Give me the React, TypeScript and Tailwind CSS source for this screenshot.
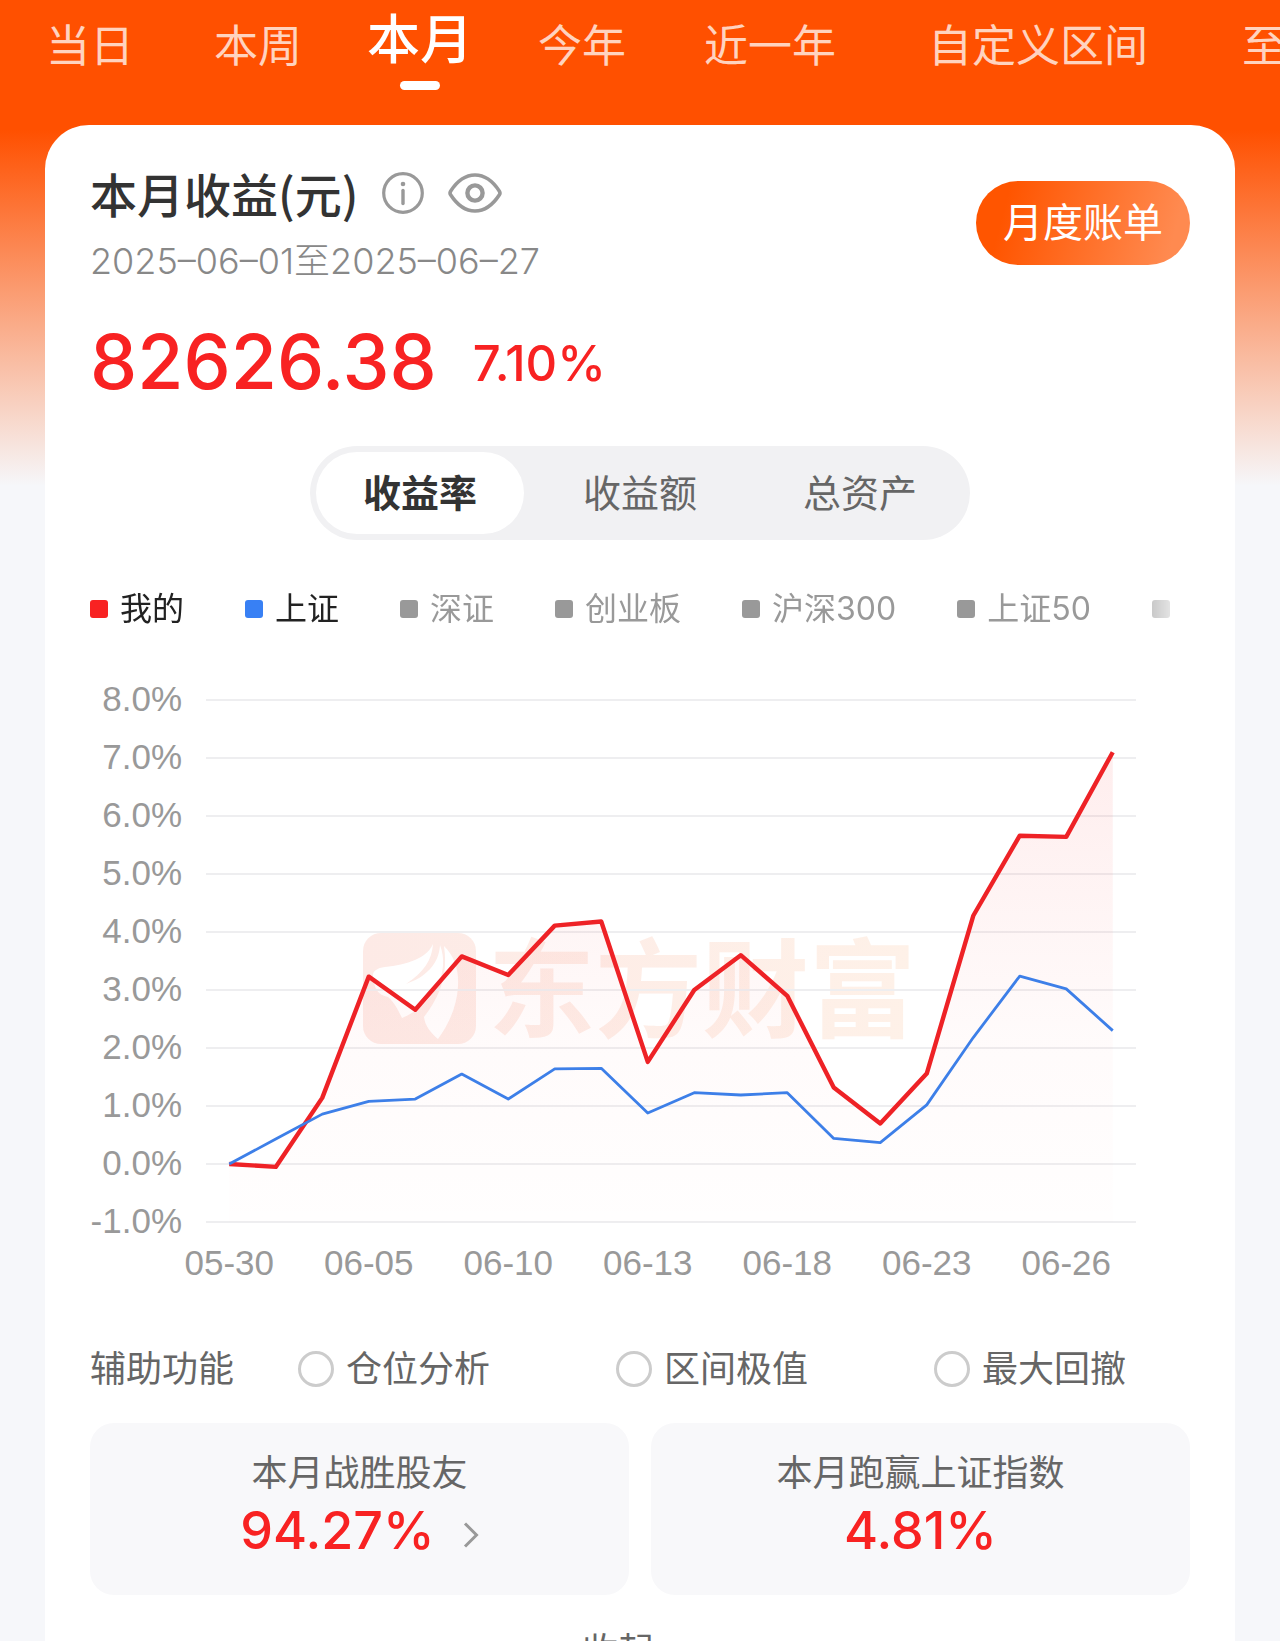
import React, { useState } from "react";

const RANGE_TABS = [
  { label: "当日", width: "w-42" },
  { label: "本周", width: "w-42" },
  { label: "本月", width: "w-39" },
  { label: "今年", width: "w-42" },
  { label: "近一年", width: "w-52" },
  { label: "自定义区间", width: "w-82" },
  { label: "至今", width: "w-42" },
];

const METRICS = ["收益率", "收益额", "总资产"];

const SERIES = [
  { label: "我的", dot: "bg-[#f82222]", text: "text-[#222222]" },
  { label: "上证", dot: "bg-[#3880f4]", text: "text-[#222222]" },
  { label: "深证", dot: "bg-[#999999]", text: "text-[#999999]" },
  { label: "创业板", dot: "bg-[#999999]", text: "text-[#999999]" },
  { label: "沪深300", dot: "bg-[#999999]", text: "text-[#999999]" },
  { label: "上证50", dot: "bg-[#999999]", text: "text-[#999999]" },
  { label: "", dot: "bg-[#999999]", text: "text-[#999999]" },
];

const HELPERS = ["仓位分析", "区间极值", "最大回撤"];

const MINE = [
  0, -0.05, 1.14, 3.23, 2.66, 3.58, 3.26, 4.11, 4.18, 1.76, 3.0, 3.6, 2.9, 1.32, 0.7, 1.56, 4.28,
  5.66, 5.64, 7.1,
];
const INDEX = [
  0, 0.43, 0.86, 1.08, 1.12, 1.55, 1.12, 1.64, 1.65, 0.88, 1.23, 1.19, 1.23, 0.44, 0.37, 1.02, 2.18,
  3.24, 3.02, 2.3,
];
const DATES = ["05-30", "06-05", "06-10", "06-13", "06-18", "06-23", "06-26"];
const LEVELS = [8, 7, 6, 5, 4, 3, 2, 1, 0, -1];

// Chart geometry, in viewBox units
const LEFT = 116;
const RIGHT = 1046;
const TOP = 21;
const ROW = 58;
const STEP = (RIGHT - LEFT) / MINE.length;

const xAt = (i: number) => LEFT + STEP * (i + 0.5);
const yAt = (v: number) => TOP + (8 - v) * ROW;
const toPoints = (values: number[]) => values.map((v, i) => `${xAt(i)},${yAt(v)}`).join(" ");

const InfoIcon: React.FC = () => (
  <svg className="size-[42px]" viewBox="0 0 42 42" fill="none" stroke="#999999">
    <circle cx="21" cy="21" r="19.3" strokeWidth="3.2" />
    <path d="M21 18.5V31.5" strokeWidth="3.4" strokeLinecap="round" />
    <circle cx="21" cy="12" r="2.3" fill="#999999" stroke="none" />
  </svg>
);

const EyeIcon: React.FC = () => (
  <svg className="h-10 w-[54px]" viewBox="0 0 54 40" fill="none" stroke="#999999">
    <path
      d="M2.6 18.2C9.5 7.5 17.5 2 27 2s17.5 5.5 24.4 16.2c.7 1.1.7 2.5 0 3.6C44.5 32.5 36.5 38 27 38S9.5 32.5 2.6 21.8c-.7-1.1-.7-2.5 0-3.6Z"
      strokeWidth="3.6"
    />
    <circle cx="27" cy="20" r="7.6" strokeWidth="4.4" />
  </svg>
);

const ReturnChart: React.FC = () => (
  <svg className="block h-auto w-full" viewBox="0 0 1100 610" role="img" aria-label="收益率">
    <defs>
      <linearGradient id="area" x1="0" y1={yAt(7.1)} x2="0" y2={yAt(-1)} gradientUnits="userSpaceOnUse">
        <stop offset="0" stopColor="#f82222" stopOpacity="0.08" />
        <stop offset="0.6" stopColor="#f82222" stopOpacity="0.02" />
        <stop offset="1" stopColor="#f82222" stopOpacity="0.005" />
      </linearGradient>
      <linearGradient id="brand" x1="270" y1="0" x2="826" y2="0" gradientUnits="userSpaceOnUse">
        <stop offset="0" stopColor="#fdeae6" />
        <stop offset="1" stopColor="#fef1e8" />
      </linearGradient>
    </defs>

    {/* watermark */}
    <rect x="273" y="254" width="113" height="111" rx="18" fill="url(#brand)" />
    <g fill="#ffffff">
      <path d="M283 296c0-4 4-7 12-8 22-2 42-9 48-23-1 16-9 28-27 40 20-7 33-20 34-39 5 13 4 28-3 41-8 15-20 26-35 32-4-8-7-15-14-21-7-2-14-4-15-22Z" />
      <path d="M354 267c11 11 15 25 14 40-1 20-9 38-20 53-7-6-13-13-14-22 17-22 24-43 20-71Z" />
    </g>
    <text
      x="398"
      y="350"
      fontSize="107"
      className="font-['Noto_Sans_CJK_SC',sans-serif] font-bold"
      fill="url(#brand)"
    >
      东方财富
    </text>

    {LEVELS.map((level) => (
      <g key={level}>
        <line x1={LEFT} x2={RIGHT} y1={yAt(level)} y2={yAt(level)} stroke="#eeeef0" strokeWidth="2" />
        <text
          x="92"
          y={yAt(level) + 11}
          textAnchor="end"
          fontSize="35"
          fill="#999999"
          className="font-['Liberation_Sans',Arial,sans-serif]"
        >
          {level.toFixed(1)}%
        </text>
      </g>
    ))}

    <polygon
      points={`${xAt(0)},${yAt(-1)} ${toPoints(MINE)} ${xAt(MINE.length - 1)},${yAt(-1)}`}
      fill="url(#area)"
    />
    <polyline points={toPoints(MINE)} fill="none" stroke="#ee2226" strokeWidth="4.4" strokeLinejoin="round" />
    <polyline points={toPoints(INDEX)} fill="none" stroke="#3d7fe8" strokeWidth="2.8" strokeLinejoin="round" />

    {DATES.map((date, i) => (
      <text
        key={date}
        x={xAt(i * 3)}
        y="596"
        textAnchor="middle"
        fontSize="35"
        fill="#999999"
        className="font-['Liberation_Sans',Arial,sans-serif]"
      >
        {date}
      </text>
    ))}
  </svg>
);

const App: React.FC = () => {
  const [range, setRange] = useState("本月");
  const [metric, setMetric] = useState("收益率");

  return (
    <div className="h-screen overflow-x-hidden overflow-y-auto bg-[#f6f7fa] bg-[linear-gradient(to_bottom,#ff5000_0px,#ff5000_130px,#f6f7fa_486px)] font-[Inter,'Noto_Sans_CJK_SC',sans-serif] [scrollbar-width:none]">
      {/* Range tabs */}
      <nav className="flex h-[125px] items-start overflow-hidden pl-1.5">
        {RANGE_TABS.map((tab) => {
          const active = tab.label === range;
          return (
            <button
              key={tab.label}
              type="button"
              onClick={() => setRange(tab.label)}
              className={`flex shrink-0 flex-col items-center whitespace-nowrap ${tab.width} ${
                active
                  ? "pt-2.5 text-[53px] leading-[60px] font-medium text-white"
                  : "pt-4 text-[44px] leading-[60px] font-normal text-white/75"
              }`}
            >
              {tab.label}
              {active && <span className="mt-[11px] h-[9px] w-10 rounded-full bg-white" />}
            </button>
          );
        })}
      </nav>

      <main className="mx-[45px] rounded-t-[44px] bg-white px-[45px] pt-10">
        {/* Summary */}
        <header className="flex items-start justify-between">
          <div>
            <div className="flex items-center">
              <h1 className="font-['Noto_Sans_CJK_SC',sans-serif] text-[47px] leading-[56px] font-medium text-[#333333]">
                本月收益(元)
              </h1>
              <button type="button" aria-label="说明" className="ml-6">
                <InfoIcon />
              </button>
              <button type="button" aria-label="显示金额" className="ml-6">
                <EyeIcon />
              </button>
            </div>
            <p className="mt-4 text-[36px] leading-[48px] font-light text-[#888888]">
              2025–06–01至2025–06–27
            </p>
          </div>
          <button
            type="button"
            className="mt-4 h-[84px] w-[214px] rounded-full bg-[linear-gradient(105deg,#ff5500_15%,#ff8a50_90%)] text-[40px] leading-none text-white"
          >
            月度账单
          </button>
        </header>

        <div className="mt-8 flex items-center gap-9 font-medium text-[#f82222]">
          <span className="text-[75px] leading-[90px]">82626.38</span>
          <span className="pt-1 text-[49px] leading-[60px]">7.10%</span>
        </div>

        {/* Metric switch */}
        <div className="mx-auto mt-[39px] grid h-[94px] w-3/5 grid-cols-3 rounded-full bg-[#f1f1f3]">
          {METRICS.map((name) => (
            <button
              key={name}
              type="button"
              onClick={() => setMetric(name)}
              className={`m-1.5 rounded-full text-[38px] leading-none ${
                metric === name ? "bg-white font-bold text-[#333333]" : "text-[#666666]"
              }`}
            >
              {name}
            </button>
          ))}
        </div>

        {/* Legend */}
        <div className="mt-[45px] flex gap-[61px] overflow-hidden whitespace-nowrap [mask-image:linear-gradient(to_right,black_calc(100%-72px),transparent)]">
          {SERIES.map((item) => (
            <button
              key={item.label}
              type="button"
              aria-label={item.label || "更多"}
              className={`flex shrink-0 items-center gap-3 text-[32px] leading-[48px] ${item.text}`}
            >
              <span className={`size-[18px] rounded-[3px] ${item.dot}`} />
              {item.label}
            </button>
          ))}
        </div>

        <div className="mt-[46px]">
          <ReturnChart />
        </div>

        {/* Helper lines */}
        <fieldset className="mt-14 flex items-center text-[36px] leading-[48px] text-[#666666]">
          <span className="mr-16">辅助功能</span>
          <div className="flex flex-1 justify-between pr-16">
            {HELPERS.map((name) => (
              <label key={name} className="flex items-center gap-3">
                <input
                  type="radio"
                  name="helper"
                  className="size-9 appearance-none rounded-full border-3 border-[#cccccc] checked:border-[#ff5000]"
                />
                {name}
              </label>
            ))}
          </div>
        </fieldset>

        <section className="mt-[30px] grid grid-cols-2 gap-[22px] text-center">
          <a href="#rank" className="rounded-3xl bg-[#f8f8fa] pt-[26px] pb-[30px]">
            <p className="text-[36px] leading-[48px] text-[#666666]">本月战胜股友</p>
            <p className="flex items-center justify-center gap-7 text-[52px] leading-[68px] font-medium text-[#f82222]">
              94.27%
              <svg className="mt-2 h-[26px] w-4" viewBox="0 0 16 26" fill="none" stroke="#999999" strokeWidth="3">
                <path d="M2 1.5 13.5 13 2 24.5" />
              </svg>
            </p>
          </a>
          <div className="rounded-3xl bg-[#f8f8fa] pt-[26px] pb-[30px]">
            <p className="text-[36px] leading-[48px] text-[#666666]">本月跑赢上证指数</p>
            <p className="text-[52px] leading-[68px] font-medium text-[#f82222]">4.81%</p>
          </div>
        </section>

        <button
          type="button"
          className="mx-auto mt-8 flex items-center gap-5 pb-8 text-[36px] leading-[48px] text-[#666666]"
        >
          收起
          <svg className="h-4 w-6" viewBox="0 0 24 16" fill="none" stroke="#999999" strokeWidth="3">
            <path d="M2 11.5 12 1l10 10.5" />
          </svg>
        </button>
      </main>
    </div>
  );
};

export default App;
